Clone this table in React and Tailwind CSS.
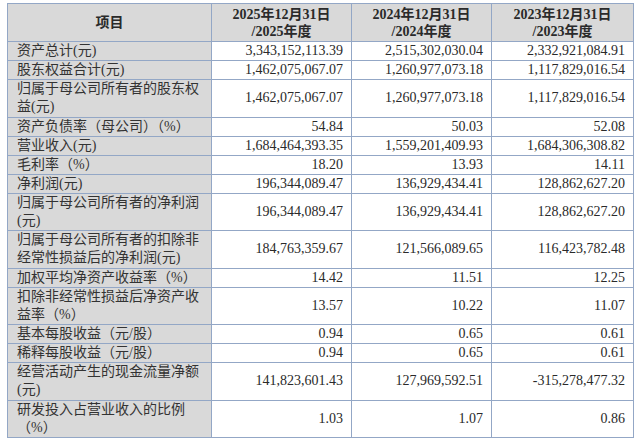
import React from 'react';

const rows = [
    { label: '资产总计(元)', values: ['3,343,152,113.39', '2,515,302,030.04', '2,332,921,084.91'] },
    { label: '股东权益合计(元)', values: ['1,462,075,067.07', '1,260,977,073.18', '1,117,829,016.54'] },
    { label: '归属于母公司所有者的股东权益(元)', tall: true, values: ['1,462,075,067.07', '1,260,977,073.18', '1,117,829,016.54'] },
    { label: '资产负债率（母公司）（%）', values: ['54.84', '50.03', '52.08'] },
    { label: '营业收入(元)', values: ['1,684,464,393.35', '1,559,201,409.93', '1,684,306,308.82'] },
    { label: '毛利率（%）', values: ['18.20', '13.93', '14.11'] },
    { label: '净利润(元)', values: ['196,344,089.47', '136,929,434.41', '128,862,627.20'] },
    { label: '归属于母公司所有者的净利润(元)', tall: true, values: ['196,344,089.47', '136,929,434.41', '128,862,627.20'] },
    { label: '归属于母公司所有者的扣除非经常性损益后的净利润(元)', tall: true, values: ['184,763,359.67', '121,566,089.65', '116,423,782.48'] },
    { label: '加权平均净资产收益率（%）', values: ['14.42', '11.51', '12.25'] },
    { label: '扣除非经常性损益后净资产收益率（%）', tall: true, values: ['13.57', '10.22', '11.07'] },
    { label: '基本每股收益（元/股）', values: ['0.94', '0.65', '0.61'] },
    { label: '稀释每股收益（元/股）', values: ['0.94', '0.65', '0.61'] },
    { label: '经营活动产生的现金流量净额(元)', tall: true, values: ['141,823,601.43', '127,969,592.51', '-315,278,477.32'] },
    { label: '研发投入占营业收入的比例（%）', tall: true, values: ['1.03', '1.07', '0.86'] },
];

const years = ['2025', '2024', '2023'];

export default function App() {
    return (
        <div className="w-[640px] h-[444px] bg-white pt-[3px] pl-[7px] font-['Liberation_Serif','Noto_Sans_CJK_SC',serif] text-[14px] text-[#2a2a2a]">
            <table className="table-fixed border-collapse w-[626px]">
                <colgroup>
                    <col className="w-[204px]" />
                    <col className="w-[140px]" />
                    <col className="w-[140px]" />
                    <col className="w-[142px]" />
                </colgroup>
                <thead>
                    <tr className="bg-[#d9d9d9]">
                        <th className="h-[38px] border border-[#93a7c6] font-bold text-center align-middle leading-[17px]">项目</th>
                        {years.map((y) => (
                            <th key={y} className="h-[38px] border border-[#93a7c6] font-bold text-center align-middle leading-[17px]">
                                {y}年12月31日
                                <br />/{y}年度
                            </th>
                        ))}
                    </tr>
                </thead>
                <tbody>
                    {rows.map((r) => (
                        <tr key={r.label}>
                            <td
                                className={`${r.tall ? 'h-[37.5px]' : 'h-[19px]'} border border-[#93a7c6] bg-[#d9d9d9] pl-[9px] pr-1 text-left align-middle leading-[18px] text-[#333] whitespace-normal break-all`}
                            >
                                {r.label}
                            </td>
                            {r.values.map((v, i) => (
                                <td
                                    key={i}
                                    className={`${r.tall ? 'h-[37.5px]' : 'h-[19px]'} border border-[#93a7c6] bg-white pr-[8px] text-right align-middle leading-[18px]`}
                                >
                                    {v}
                                </td>
                            ))}
                        </tr>
                    ))}
                </tbody>
            </table>
        </div>
    );
}
